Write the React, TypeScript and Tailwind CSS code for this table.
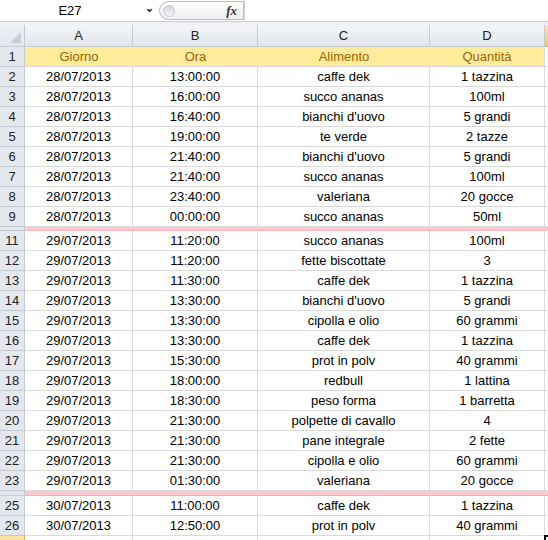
import { ChevronDown } from 'lucide-react'

type Row = { n: number; cells?: [string, string, string, string]; pink?: boolean; head?: boolean }

const data: Row[] = [
  { n: 1, head: true, cells: ['Giorno', 'Ora', 'Alimento', 'Quantità'] },
  { n: 2, cells: ['28/07/2013', '13:00:00', 'caffe dek', '1 tazzina'] },
  { n: 3, cells: ['28/07/2013', '16:00:00', 'succo ananas', '100ml'] },
  { n: 4, cells: ['28/07/2013', '16:40:00', "bianchi d'uovo", '5 grandi'] },
  { n: 5, cells: ['28/07/2013', '19:00:00', 'te verde', '2 tazze'] },
  { n: 6, cells: ['28/07/2013', '21:40:00', "bianchi d'uovo", '5 grandi'] },
  { n: 7, cells: ['28/07/2013', '21:40:00', 'succo ananas', '100ml'] },
  { n: 8, cells: ['28/07/2013', '23:40:00', 'valeriana', '20 gocce'] },
  { n: 9, cells: ['28/07/2013', '00:00:00', 'succo ananas', '50ml'] },
  { n: 10, pink: true },
  { n: 11, cells: ['29/07/2013', '11:20:00', 'succo ananas', '100ml'] },
  { n: 12, cells: ['29/07/2013', '11:20:00', 'fette biscottate', '3'] },
  { n: 13, cells: ['29/07/2013', '11:30:00', 'caffe dek', '1 tazzina'] },
  { n: 14, cells: ['29/07/2013', '13:30:00', "bianchi d'uovo", '5 grandi'] },
  { n: 15, cells: ['29/07/2013', '13:30:00', 'cipolla e olio', '60 grammi'] },
  { n: 16, cells: ['29/07/2013', '13:30:00', 'caffe dek', '1 tazzina'] },
  { n: 17, cells: ['29/07/2013', '15:30:00', 'prot in polv', '40 grammi'] },
  { n: 18, cells: ['29/07/2013', '18:00:00', 'redbull', '1 lattina'] },
  { n: 19, cells: ['29/07/2013', '18:30:00', 'peso forma', '1 barretta'] },
  { n: 20, cells: ['29/07/2013', '21:30:00', 'polpette di cavallo', '4'] },
  { n: 21, cells: ['29/07/2013', '21:30:00', 'pane integrale', '2 fette'] },
  { n: 22, cells: ['29/07/2013', '21:30:00', 'cipolla e olio', '60 grammi'] },
  { n: 23, cells: ['29/07/2013', '01:30:00', 'valeriana', '20 gocce'] },
  { n: 24, pink: true },
  { n: 25, cells: ['30/07/2013', '11:00:00', 'caffe dek', '1 tazzina'] },
  { n: 26, cells: ['30/07/2013', '12:50:00', 'prot in polv', '40 grammi'] },
  { n: 27 },
]

const widths = ['w-[108px]', 'w-[125px]', 'w-[172px]', 'w-[115px]']

function FormulaBar() {
  return (
    <div className="flex h-[21px] bg-white">
      <div className="relative w-[159px] shrink-0 flex items-center">
        <span className="w-[140px] text-center text-[13px] text-black">E27</span>
        <ChevronDown className="absolute left-[145px] top-[6px] h-[9px] w-[9px] fill-[#333] text-[#333]" strokeWidth={3} />
      </div>
      <div className="mt-[1px] h-[19px] w-[85px] shrink-0 rounded-l-full border border-[#b4bac2] bg-gradient-to-b from-white to-[#eef0f3] flex items-center justify-between pl-[3px] pr-[6px]">
        <div className="h-[12px] w-[12px] rounded-full bg-gradient-to-b from-[#d3d6da] to-[#f4f5f6] border border-[#c4c8cd]" />
        <span className="font-['Liberation_Serif',serif] italic font-bold text-[13px] text-[#333]">fx</span>
      </div>
      <div className="flex-1 border-l border-[#d4d8dd] bg-white" />
    </div>
  )
}

function ColHeader() {
  const cls = 'h-full shrink-0 flex items-center justify-center border-r border-b border-[#c5cad1] bg-gradient-to-b from-[#f3f5f7] to-[#e2e6eb] text-[#222]'
  return (
    <div className="flex h-[22px]">
      <div className="relative w-[25px] shrink-0 border-r border-b border-[#c5cad1] bg-gradient-to-b from-[#eef1f4] to-[#e2e6eb]">
        <svg className="absolute right-[3px] bottom-[3px]" width="11" height="11" viewBox="0 0 11 11">
          <polygon points="11,0 11,11 0,11" fill="#c9ced4" />
        </svg>
      </div>
      {['A', 'B', 'C', 'D'].map((l, i) => (
        <div key={l} className={`${widths[i]} ${cls}`}>{l}</div>
      ))}
      <div className="flex-1 border-b border-[#e3b24f] bg-gradient-to-b from-[#fbe3a9] to-[#f4c766]" />
    </div>
  )
}

function SheetRow({ row }: { row: Row }) {
  const h = row.n === 10 ? 'h-[4px]' : row.n === 24 ? 'h-[5px]' : 'h-[20px]'
  const sel = row.n === 27
  return (
    <div className={`flex ${h}`}>
      <div
        className={`w-[25px] shrink-0 flex items-center justify-center border-r border-b text-[#222] ${
          sel
            ? 'border-[#e3b24f] bg-gradient-to-b from-[#fbe3a9] to-[#f4c766]'
            : 'border-[#c5cad1] bg-[#e4e8ee]'
        }`}
      >
        {row.pink || sel ? null : row.n}
      </div>
      {widths.map((w, i) => {
        let style = 'border-r border-b border-[#dadada] bg-white text-black'
        if (row.pink) style = 'border-b border-[#f6b3bd] bg-[#ffc7ce]'
        if (row.head) style = `border-b border-[#dadada] bg-[#ffeb9c] text-[#9c6500] ${i === 3 ? 'border-r' : ''}`
        return (
          <div key={i} className={`${w} shrink-0 flex items-center justify-center whitespace-nowrap ${style}`}>
            {row.cells ? row.cells[i] : ''}
          </div>
        )
      })}
      <div
        className={`flex-1 ${
          row.pink ? 'bg-[#ffc7ce] border-b border-[#f6b3bd]' : sel ? 'bg-white border-t-2 border-l-2 border-black -mt-[1px] -ml-[1px]' : 'bg-white border-b border-[#dadada]'
        }`}
      />
    </div>
  )
}

export default function App() {
  return (
    <div className="h-[540px] w-[548px] overflow-hidden bg-white font-['Liberation_Sans',Arial,sans-serif] text-[13px]">
      <FormulaBar />
      <div className="h-[4px] border-t border-[#c8cdd3] bg-[#eef0f2]" />
      <ColHeader />
      {data.map((r) => (
        <SheetRow key={r.n} row={r} />
      ))}
    </div>
  )
}
